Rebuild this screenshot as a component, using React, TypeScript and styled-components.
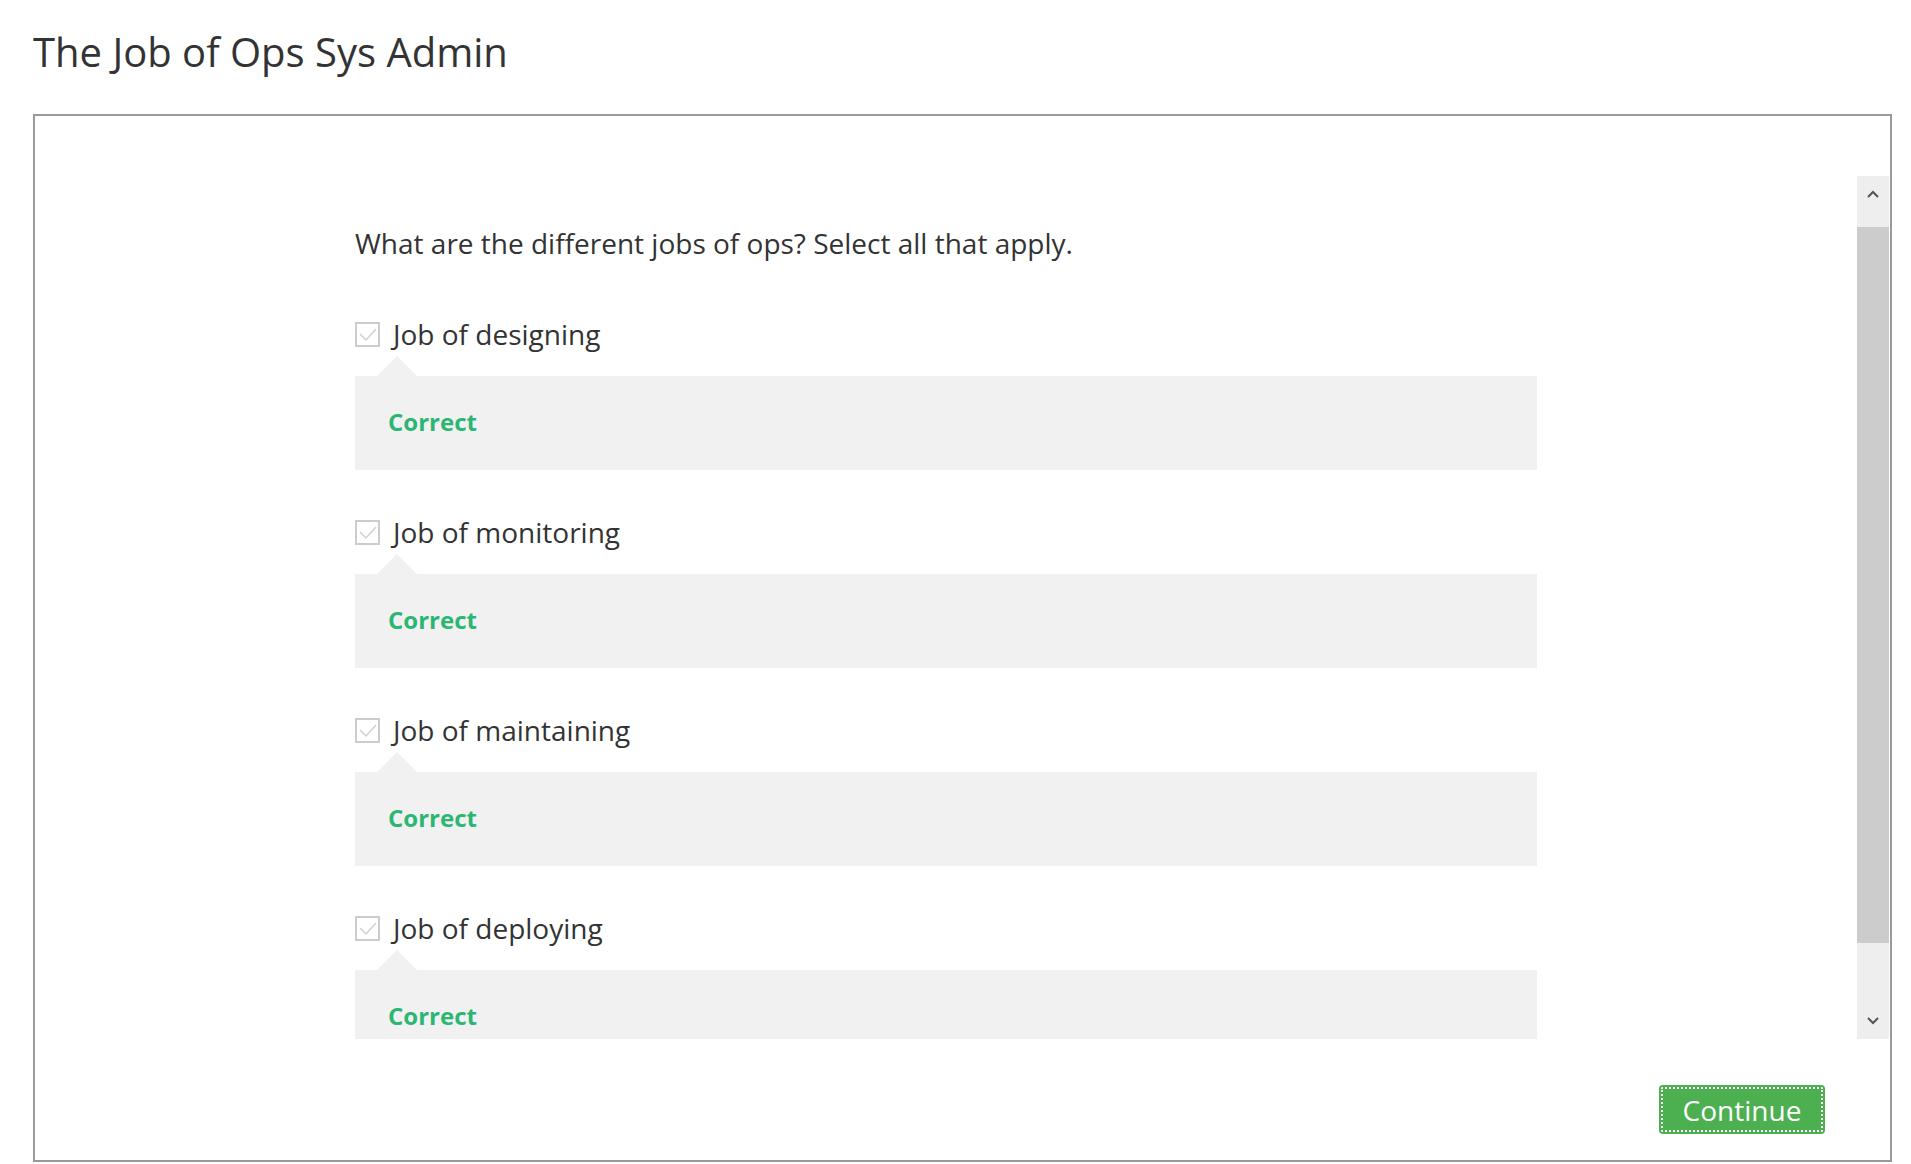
import React from "react";
import styled, { createGlobalStyle } from "styled-components";

const GlobalStyle = createGlobalStyle`
  html, body {
    margin: 0;
    padding: 0;
    background: #ffffff;
    font-family: "Open Sans", "Liberation Sans", sans-serif;
    color: #333333;
  }
`;

const options = [
  "Job of designing",
  "Job of monitoring",
  "Job of maintaining",
  "Job of deploying",
];

export default function App() {
  return (
    <>
      <GlobalStyle />
      <Page>
        <Title>The Job of Ops Sys Admin</Title>
        <Frame>
          <ScrollArea>
            <ScrollContent>
              <Inner>
                <Question>What are the different jobs of ops? Select all that apply.</Question>
                {options.map((label) => (
                  <Choice key={label}>
                    <OptionRow>
                      <CheckBox>
                        <svg width="21" height="21" viewBox="0 0 21 21">
                          <polyline
                            points="3,10 9,16 19,5"
                            fill="none"
                            stroke="#d0d0d0"
                            strokeWidth="1.5"
                          />
                        </svg>
                      </CheckBox>
                      <OptionLabel>{label}</OptionLabel>
                    </OptionRow>
                    <Feedback>
                      <FeedbackText>Correct</FeedbackText>
                    </Feedback>
                  </Choice>
                ))}
              </Inner>
            </ScrollContent>
            <ScrollBar>
              <ArrowButton>
                <svg width="12" height="8" viewBox="0 0 12 8">
                  <polyline points="1,7 6,2 11,7" fill="none" stroke="#555" strokeWidth="2" />
                </svg>
              </ArrowButton>
              <Track>
                <Thumb />
              </Track>
              <ArrowButton>
                <svg width="12" height="8" viewBox="0 0 12 8">
                  <polyline points="1,1 6,6 11,1" fill="none" stroke="#555" strokeWidth="2" />
                </svg>
              </ArrowButton>
            </ScrollBar>
          </ScrollArea>
          <Footer>
            <ContinueButton>Continue</ContinueButton>
          </Footer>
        </Frame>
      </Page>
    </>
  );
}

const Page = styled.div`
  padding: 0 19px 0 33px;
`;

const Title = styled.h1`
  margin: 0;
  height: 114px;
  box-sizing: border-box;
  padding-top: 26px;
  font-size: 40px;
  line-height: 52px;
  font-weight: 400;
  color: #333333;
`;

const Frame = styled.div`
  border: 2px solid #999999;
  height: 1048px;
  box-sizing: border-box;
  display: flex;
  flex-direction: column;
  padding-top: 60px;
`;

const ScrollArea = styled.div`
  display: flex;
  height: 863px;
  overflow: hidden;
`;

const ScrollContent = styled.div`
  flex: 1;
  overflow: hidden;
  padding-top: 50px;
`;

const Inner = styled.div`
  width: 1182px;
  margin: 0 auto;
`;

const Question = styled.p`
  margin: 0 0 56px;
  font-size: 28px;
  line-height: 34px;
`;

const Choice = styled.div`
  margin-bottom: 44px;
`;

const OptionRow = styled.div`
  display: flex;
  align-items: center;
  height: 36px;
`;

const CheckBox = styled.span`
  width: 25px;
  height: 25px;
  box-sizing: border-box;
  border: 2px solid #cccccc;
  display: flex;
  align-items: center;
  justify-content: center;
  margin-right: 13px;
`;

const OptionLabel = styled.span`
  font-size: 28px;
  line-height: 36px;
`;

const Feedback = styled.div`
  position: relative;
  margin-top: 24px;
  background: #f1f1f1;
  padding: 31px 33px 33px;

  &::before {
    content: "";
    position: absolute;
    top: -20px;
    left: 22px;
    border-left: 20px solid transparent;
    border-right: 20px solid transparent;
    border-bottom: 20px solid #f1f1f1;
  }
`;

const FeedbackText = styled.div`
  font-size: 24px;
  line-height: 30px;
  font-weight: 700;
  color: #2bb673;
`;

const ScrollBar = styled.div`
  width: 32px;
  margin-right: 1px;
  background: #eeeeee;
  display: flex;
  flex-direction: column;
`;

const ArrowButton = styled.div`
  height: 36px;
  display: flex;
  align-items: center;
  justify-content: center;
`;

const Track = styled.div`
  flex: 1;
  padding-top: 15px;
`;

const Thumb = styled.div`
  height: 716px;
  width: 32px;
  background: #cccccc;
`;

const Footer = styled.div`
  flex: 1;
  display: flex;
  justify-content: flex-end;
  align-items: flex-start;
  padding: 46px 65px 0 0;
`;

const ContinueButton = styled.button`
  width: 166px;
  height: 49px;
  background: #4caf50;
  color: #ffffff;
  border: none;
  border-radius: 4px;
  font-family: "Open Sans", "Liberation Sans", sans-serif;
  font-size: 28px;
  outline: 2px dotted #ffffff;
  outline-offset: -4px;
  cursor: pointer;
`;
